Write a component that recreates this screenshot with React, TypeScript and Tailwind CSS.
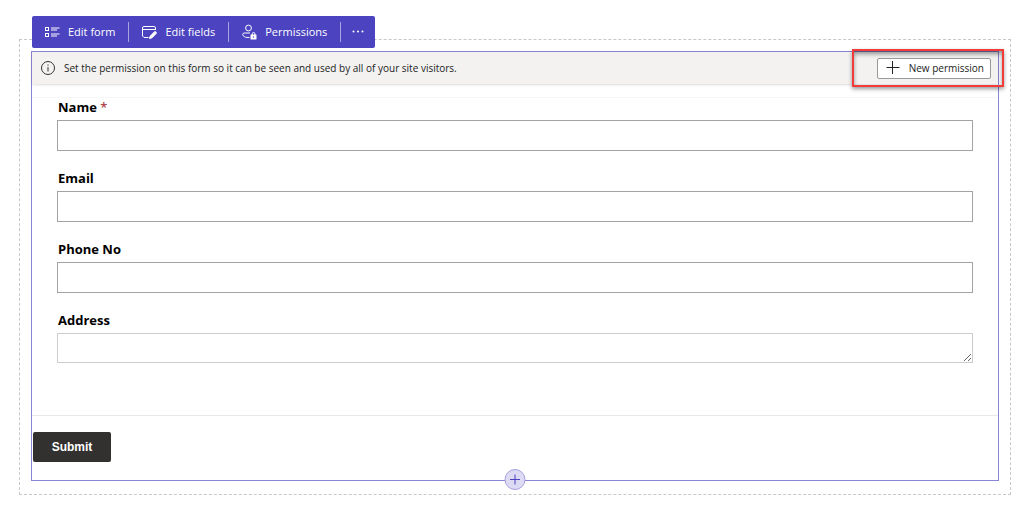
import type { ReactNode } from 'react';

function EditFormIcon() {
  return (
    <svg className="h-4 w-4" viewBox="0 0 16 16" fill="none" stroke="currentColor" aria-hidden="true">
      <rect x="1.5" y="3.5" width="3" height="3" />
      <rect x="1.5" y="9.5" width="3" height="3" />
      <path d="M7 4h8.500M7 6h6M7 10h8.500M7 12h6" />
    </svg>
  );
}

function EditFieldsIcon() {
  return (
    <svg className="h-4 w-4" viewBox="0 0 16 16" fill="none" stroke="currentColor" aria-hidden="true">
      <path d="M7.500 13.500H3L1.500 12V4A1.500 1.500 0 0 1 3 2.500h10A1.500 1.500 0 0 1 14.500 4V6M1.500 5.500h13" />
      <path d="M8.500 14.500l.6-2.300 4.200-4.200a1.100 1.100 0 0 1 1.700 1.700l-4.200 4.200z" fill="currentColor" />
    </svg>
  );
}

function PermissionsIcon() {
  return (
    <svg className="h-4 w-4" viewBox="0 0 16 16" fill="none" stroke="currentColor" aria-hidden="true">
      <circle cx="7.500" cy="4" r="2.900" />
      <path d="M9 9H3.300A1.500 1.500 0 0 0 1.800 10.500C2 12.700 4.500 13.600 8.500 13.500" />
      <path d="M11.300 11V9.800a1.300 1.300 0 0 1 2.600 0V11" />
      <rect x="9.500" y="10.500" width="6" height="5" rx="0.500" fill="currentColor" stroke="none" />
      <circle cx="12.500" cy="13" r="0.700" fill="#4b43bf" stroke="none" />
    </svg>
  );
}

function InfoIcon() {
  return (
    <svg className="h-4 w-4 shrink-0" viewBox="0 0 16 16" fill="none" stroke="#333" aria-hidden="true">
      <circle cx="8" cy="8" r="6.500" />
      <path d="M8 7v4.500M8 4.500v1.200" />
    </svg>
  );
}

function ToolButton({ icon, children }: { icon: ReactNode; children: string }) {
  return (
    <button type="button" className="flex h-full items-center gap-2 pr-[13px] pl-3 text-[11px] whitespace-nowrap">
      {icon}
      {children}
    </button>
  );
}

function Divider() {
  return <span className="h-5 w-px bg-[#a9a5df]" />;
}

function Toolbar() {
  return (
    <div
      role="toolbar"
      aria-label="Form actions"
      className="absolute -top-6 left-3 flex h-8 items-center rounded-xs bg-[#4b43bf] text-white"
    >
      <ToolButton icon={<EditFormIcon />}>Edit form</ToolButton>
      <Divider />
      <ToolButton icon={<EditFieldsIcon />}>Edit fields</ToolButton>
      <Divider />
      <ToolButton icon={<PermissionsIcon />}>Permissions</ToolButton>
      <Divider />
      <button type="button" aria-label="More" className="flex h-full items-center px-[11px]">
        <svg className="h-3 w-3" viewBox="0 0 12 12" fill="currentColor" aria-hidden="true">
          <circle cx="1.500" cy="5.500" r="1" />
          <circle cx="6" cy="5.500" r="1" />
          <circle cx="10.500" cy="5.500" r="1" />
        </svg>
      </button>
    </div>
  );
}

function Field({ id, label, required, multiline }: { id: string; label: string; required?: boolean; multiline?: boolean }) {
  return (
    <div>
      <label htmlFor={id} className="block h-[22px] pl-px text-[13px] leading-[18px] font-bold text-black">
        {label}
        {required && <span className="font-semibold text-[#b0444a]"> *</span>}
      </label>
      {multiline ? (
        <textarea id={id} rows={1} className="block h-[30px] w-full resize border border-[#ccc] bg-white px-2" />
      ) : (
        <input id={id} type="text" required={required} className="block h-[31px] w-full border border-[#a3a3a3] bg-white px-2" />
      )}
    </div>
  );
}

export default function App() {
  return (
    <main className="bg-white pt-[39px] pr-[13px] pl-[19px] font-['Open_Sans','Noto_Sans',sans-serif]">
      <section className="relative border border-dashed border-[#c8c8c8] px-[11px] pt-[11px] pb-[13px]">
        <Toolbar />
        <div className="relative border border-[#8a84d6] pb-[18px]">
          <div className="relative flex h-8 items-center gap-2 bg-[#f3f2f1] pr-[7px] pl-2 text-[#222] shadow-sm">
            <InfoIcon />
            <p className="text-[10px]">Set the permission on this form so it can be seen and used by all of your site visitors.</p>
            <button
              type="button"
              className="ml-auto flex h-[21px] items-center gap-2 rounded-xs border border-[#999] bg-white pr-[6px] pl-[7px] text-[10px] whitespace-nowrap"
            >
              <svg className="h-4 w-4" viewBox="0 0 16 16" stroke="#222" aria-hidden="true">
                <path d="M1.500 7.500h13M7.500 1v13" />
              </svg>
              New permission
            </button>
            <div
              aria-hidden="true"
              className="pointer-events-none absolute -top-[3px] -right-[6px] h-[38px] w-[152px] border-2 border-[#f23c3c] shadow-[0_2px_4px_rgba(0,0,0,0.4),inset_0_3px_4px_rgba(0,0,0,0.4)]"
            />
          </div>
          <form className="mt-[13px] border-t border-[#f7f7f7]" onSubmit={(event) => event.preventDefault()}>
            <div className="flex flex-col gap-[18px] pr-[25px] pb-[52px] pl-[25px]">
              <Field id="name" label="Name" required />
              <Field id="email" label="Email" />
              <Field id="phone" label="Phone No" />
              <Field id="address" label="Address" multiline />
            </div>
            <div className="border-t border-[#e8e8e8] pt-4 pl-px">
              <button
                type="submit"
                className="h-[30px] w-[78px] rounded-xs bg-[#323130] font-['Liberation_Sans',Arial,sans-serif] text-xs font-bold text-white"
              >
                Submit
              </button>
            </div>
          </form>
          <button
            type="button"
            aria-label="Add component"
            className="absolute -bottom-[10px] left-1/2 flex h-[21px] w-[21px] -translate-x-1/2 items-center justify-center rounded-full border border-[#a5a0e0] bg-[#dddbf3] text-[#4b43bf]"
          >
            <svg className="h-[11px] w-[11px]" viewBox="0 0 11 11" stroke="currentColor" aria-hidden="true">
              <path d="M0.500 5.500h10M5.500 0.500v10" />
            </svg>
          </button>
        </div>
      </section>
    </main>
  );
}
